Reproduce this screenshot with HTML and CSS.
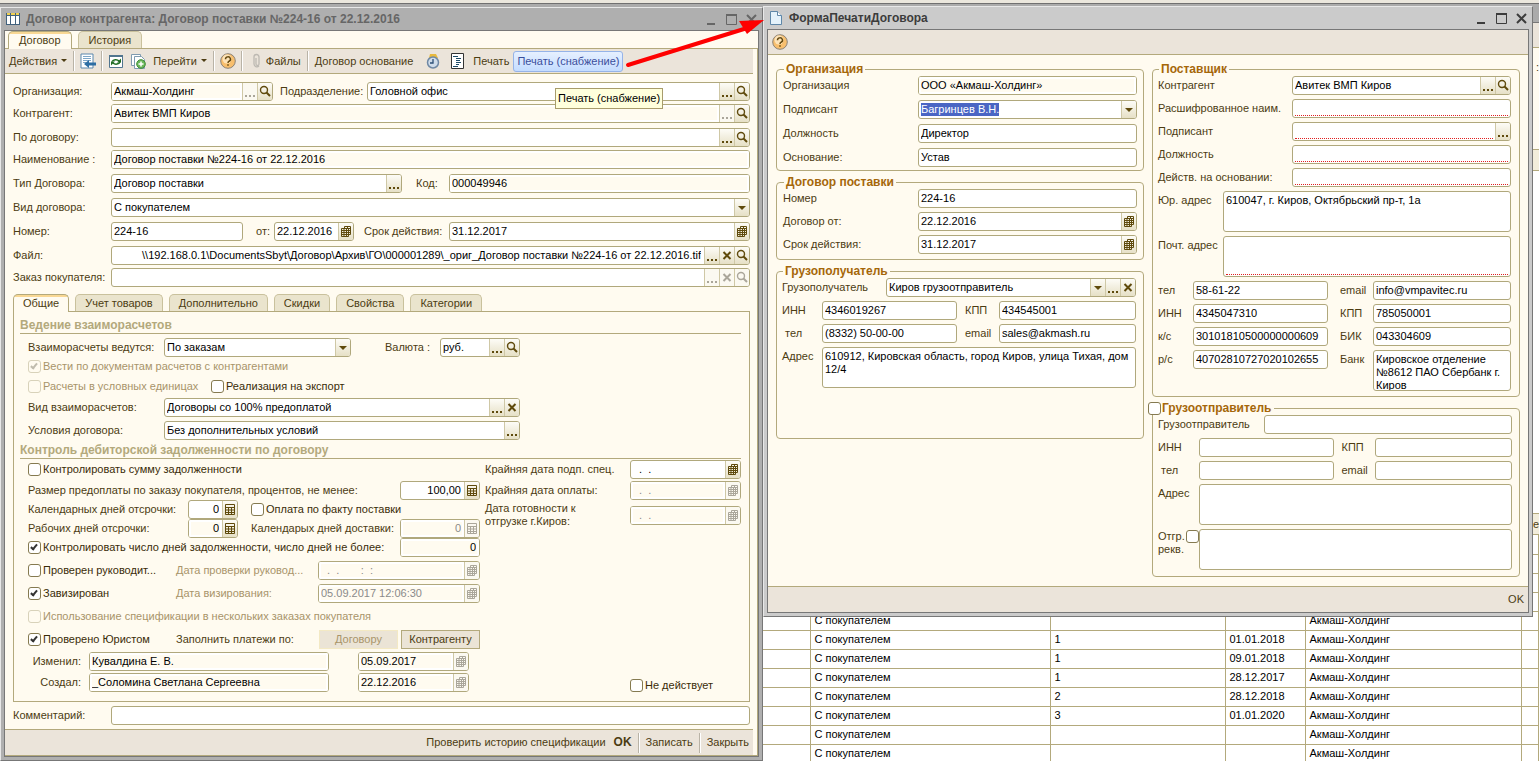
FILE: index.html
```html
<!DOCTYPE html>
<html lang="ru">
<head>
    <meta charset="UTF-8">
    <meta name="viewport" content="width=device-width, initial-scale=1.0">
    <title>Договор контрагента</title>
    <link rel="stylesheet" href="styles.css">
</head>
<body>

<!-- Shared icons -->
<svg class="sprite" aria-hidden="true">
    <symbol id="dots" viewBox="0 0 14 17"><path d="M2 12h2v2H2zM6 12h2v2H6zM10 12h2v2h-2z" fill="currentColor"/></symbol>
    <symbol id="lens" viewBox="0 0 14 17"><circle cx="6" cy="7" r="3.500" fill="none" stroke="currentColor" stroke-width="1.400"/><path d="M8.500 9.500l3.500 3.500" stroke="currentColor" stroke-width="2"/></symbol>
    <symbol id="drop" viewBox="0 0 14 17"><path d="M3 7h8l-4 4z" fill="currentColor"/></symbol>
    <symbol id="cross" viewBox="0 0 14 17"><path d="M3.500 5l7 7M10.500 5l-7 7" stroke="currentColor" stroke-width="2"/></symbol>
    <symbol id="cal" viewBox="0 0 14 17"><path d="M5.500 5V3.500h6v8H10M8.500 3v3M5.500 5.500h6M10 7.500h1.500M10 9.500h1.500" fill="none" stroke="currentColor"/><path d="M2.500 5.500h7v8h-7zM5 5v9M7.500 5v9M2.500 7.500h7M2.500 9.500h7M2.500 11.500h7" fill="none" stroke="currentColor"/></symbol>
    <symbol id="calc" viewBox="0 0 14 17"><path d="M2.500 3.500h9v10h-9zM2 6.500h10M2.500 9h9M2.500 11.500h9M5.500 7v6M8.500 7v6" fill="none" stroke="currentColor" stroke-width="1"/><path d="M2 6h10v1H2z" fill="currentColor"/></symbol>
    <symbol id="help" viewBox="0 0 16 16"><circle cx="8" cy="8" r="7.300" fill="#f8bf6d" stroke="#8b8378"/><circle cx="7" cy="6" r="4.500" fill="#fde3b8"/><path d="M5.500 6.200a2.500 2.300 0 1 1 3.600 2c-.8.400-1.100.7-1.100 1.700M8 11.200v1.600" fill="none" stroke="#63480e" stroke-width="1.500"/></symbol>
</svg>

<!-- Contract list in the back -->
<div class="backdrop">
    <div class="back-top"></div>
    <div class="back-title"></div>
    <div class="back-bar"></div>
    <div class="back-form">:</div>
    <div class="back-head"></div>
    <div class="back-list"></div>
    <div class="back-head">е</div>
    <table class="list">
        <colgroup><col class="c1"><col class="c2"><col class="c3"><col class="c4"><col class="c5"><col class="c6"><col class="c7"><col class="c8"><col></colgroup>
        <tr><td></td><td></td><td></td><td></td><td></td><td></td><td></td><td></td><td></td></tr>
        <tr><td></td><td></td><td></td><td></td><td></td><td></td><td></td><td></td><td></td></tr>
        <tr><td></td><td></td><td></td><td></td><td></td><td></td><td></td><td></td><td></td></tr>
        <tr><td></td><td></td><td></td><td></td><td></td><td></td><td></td><td></td><td></td></tr>
        <tr><td></td><td></td><td></td><td></td><td>С покупателем</td><td></td><td></td><td>Акмаш-Холдинг</td><td></td></tr>
        <tr><td></td><td></td><td></td><td></td><td>С покупателем</td><td>1</td><td>01.01.2018</td><td>Акмаш-Холдинг</td><td></td></tr>
        <tr><td></td><td></td><td></td><td></td><td>С покупателем</td><td>1</td><td>09.01.2018</td><td>Акмаш-Холдинг</td><td></td></tr>
        <tr><td></td><td></td><td></td><td></td><td>С покупателем</td><td>1</td><td>28.12.2017</td><td>Акмаш-Холдинг</td><td></td></tr>
        <tr><td></td><td></td><td></td><td></td><td>С покупателем</td><td>2</td><td>28.12.2018</td><td>Акмаш-Холдинг</td><td></td></tr>
        <tr><td></td><td></td><td></td><td></td><td>С покупателем</td><td>3</td><td>01.01.2020</td><td>Акмаш-Холдинг</td><td></td></tr>
        <tr><td></td><td></td><td></td><td></td><td>С покупателем</td><td></td><td></td><td>Акмаш-Холдинг</td><td></td></tr>
        <tr><td></td><td></td><td></td><td></td><td>С покупателем</td><td></td><td></td><td>Акмаш-Холдинг</td><td></td></tr>
    </table>
</div>

<div class="desktop">

<!-- Contract window -->
<section class="window inactive">
    <header class="title">
        <svg class="title-icon" viewBox="0 0 14 14"><path d="M0 1h14v12H0z" fill="#41617c"/><path d="M1 4h3v8H1zM5 4h4v8H5zM10 4h3v8h-3z" fill="#fff"/><path d="M1 1h3v2H1zM5 1h4v2H5zM10 1h3v2h-3z" fill="#f0d050"/></svg>
        <h1>Договор контрагента: Договор поставки №224-16 от 22.12.2016</h1>
        <button type="button" class="win-btn"><svg viewBox="0 0 14 14"><path d="M3 12h8" stroke="currentColor" stroke-width="2"/></svg></button>
        <button type="button" class="win-btn"><svg viewBox="0 0 14 14"><path d="M2.500 2.500h10v10h-10z" fill="none" stroke="currentColor"/><path d="M2 3h11" stroke="currentColor" stroke-width="2"/></svg></button>
        <button type="button" class="win-btn"><svg viewBox="0 0 14 14"><path d="M3 3l9 9M12 3l-9 9" stroke="currentColor" stroke-width="2"/></svg></button>
    </header>
    <div class="client">
        <nav class="tabs main-tabs">
            <button type="button" class="tab active">Договор</button>
            <button type="button" class="tab">История</button>
        </nav>
        <div class="sheet">
            <div class="toolbar">
                <button type="button" class="tool">Действия<i class="caret"></i></button>
                <i class="sep"></i>
                <button type="button" class="tool pic"><svg class="ico" viewBox="0 0 16 16"><path d="M1 1h12v14H1z" fill="#fff" stroke="#5b87ad"/><path d="M3 3.500h8M3 5.500h8M3 7.500h8M3 9.500h3" stroke="#7da6c8"/><path d="M16 9.500H9V7l-5 4 5 4v-2.500h7z" fill="#2c6da3"/></svg></button>
                <i class="sep"></i>
                <button type="button" class="tool pic"><svg class="ico" viewBox="0 0 16 16"><path d="M1.500 2.500h13v12h-13z" fill="#fff" stroke="#51758f"/><path d="M1 2h14v2H1z" fill="#51758f"/><path d="M4 8.500a4 3 0 0 1 7-.5M12 9a4 3 0 0 1-7 1" fill="none" stroke="#1f6b23" stroke-width="1.500"/><path d="M13 5.500v4H9zM3 12.500v-4h4z" fill="#1f6b23"/></svg></button>
                <button type="button" class="tool pic"><svg class="ico" viewBox="0 0 16 16"><path d="M1.500 1.500h9v11h-9z" fill="#fff" stroke="#7f9bb0"/><path d="M4.500 3.500h7l3 3v9h-10z" fill="#fff" stroke="#7f9bb0"/><circle cx="11" cy="11" r="4.300" fill="#6cb95c" stroke="#3f8a35"/><path d="M11 8.500v5M8.500 11h5" stroke="#fff" stroke-width="1.500"/></svg></button>
                <button type="button" class="tool">Перейти<i class="caret"></i></button>
                <i class="sep"></i>
                <button type="button" class="tool pic"><svg class="ico"><use href="#help"/></svg></button>
                <i class="sep"></i>
                <button type="button" class="tool clip"><svg class="ico" viewBox="0 0 16 16"><path d="M7 5v6a1 1 0 0 0 3 0V4a2 2 0 0 0-5 0v7a3 3 0 0 0 5 2" fill="none" stroke="#bdb9b2" stroke-width="1.300"/></svg>Файлы</button>
                <i class="sep"></i>
                <button type="button" class="tool base">Договор основание</button>
                <button type="button" class="tool"><svg class="ico" viewBox="0 0 16 16"><path d="M5 1h6l2 4H4z" fill="#e8b93c"/><circle cx="8" cy="9.500" r="5.500" fill="#cfdcea" stroke="#6f88a4" stroke-width="1.500"/><path d="M8 6v4H5" fill="none" stroke="#2b4e76" stroke-width="1.300"/></svg></button>
                <button type="button" class="tool"><svg class="ico" viewBox="0 0 16 16"><path d="M2.500.5h12v15h-12z" fill="#fff" stroke="#333"/><path d="M4 3.500h5M7 5.500h5M7 7.500h4M7 9.500h5M7 11.500h3M4 13.500h5" stroke="#1c4a66"/></svg></button>
                <button type="button" class="tool">Печать</button>
                <button type="button" class="tool hot">Печать (снабжение)</button>
            </div>

            <form class="form">
                <div class="row">
                    <label class="lab" for="org">Организация:</label>
                    <div class="field ro w162"><input id="org" value="Акмаш-Холдинг" readonly><button type="button" class="off"><svg><use href="#dots"/></svg></button><button type="button"><svg><use href="#lens"/></svg></button></div>
                    <label class="lab-dep" for="dep">Подразделение:</label>
                    <div class="field grow"><input id="dep" value="Головной офис"><button type="button"><svg><use href="#dots"/></svg></button><button type="button"><svg><use href="#lens"/></svg></button></div>
                </div>
                <div class="row">
                    <label class="lab" for="agent">Контрагент:</label>
                    <div class="field ro grow"><input id="agent" value="Авитек ВМП Киров" readonly><button type="button" class="off"><svg><use href="#dots"/></svg></button><button type="button"><svg><use href="#lens"/></svg></button></div>
                </div>
                <div class="row loose">
                    <label class="lab" for="parent">По договору:</label>
                    <div class="field grow"><input id="parent"><button type="button"><svg><use href="#dots"/></svg></button><button type="button"><svg><use href="#lens"/></svg></button></div>
                </div>
                <div class="row">
                    <label class="lab" for="name">Наименование :</label>
                    <div class="field ro grow"><input id="name" value="Договор поставки №224-16 от 22.12.2016" readonly></div>
                </div>
                <div class="row loose">
                    <label class="lab" for="type">Тип Договора:</label>
                    <div class="field w291"><input id="type" value="Договор поставки"><button type="button"><svg><use href="#dots"/></svg></button></div>
                    <label class="lab-code" for="code">Код:</label>
                    <div class="field ro grow"><input id="code" value="000049946" readonly></div>
                </div>
                <div class="row loose">
                    <label class="lab" for="kind">Вид договора:</label>
                    <div class="field grow"><select id="kind"><option>С покупателем</option></select><span class="pick"><svg><use href="#drop"/></svg></span></div>
                </div>
                <div class="row loose">
                    <label class="lab" for="num">Номер:</label>
                    <div class="field w132"><input id="num" value="224-16"></div>
                    <label class="lab-from" for="from">от:</label>
                    <div class="field w80"><input id="from" value="22.12.2016"><button type="button"><svg><use href="#cal"/></svg></button></div>
                    <label class="lab-till" for="till">Срок действия:</label>
                    <div class="field grow"><input id="till" value="31.12.2017"><button type="button"><svg><use href="#cal"/></svg></button></div>
                </div>
                <div class="row loose">
                    <label class="lab" for="file">Файл:</label>
                    <div class="field grow"><input id="file" class="num" value="\\192.168.0.1\DocumentsSbyt\Договор\Архив\ГО\000001289\_ориг_Договор поставки №224-16 от 22.12.2016.tif"><button type="button"><svg><use href="#dots"/></svg></button><button type="button"><svg><use href="#cross"/></svg></button><button type="button"><svg><use href="#lens"/></svg></button></div>
                </div>
                <div class="row">
                    <label class="lab" for="order">Заказ покупателя:</label>
                    <div class="field grow"><input id="order"><button type="button" class="off"><svg><use href="#dots"/></svg></button><button type="button" class="off"><svg><use href="#cross"/></svg></button><button type="button" class="off"><svg><use href="#lens"/></svg></button></div>
                </div>

                <nav class="tabs inner-tabs">
                    <button type="button" class="tab active">Общие</button>
                    <button type="button" class="tab">Учет товаров</button>
                    <button type="button" class="tab">Дополнительно</button>
                    <button type="button" class="tab">Скидки</button>
                    <button type="button" class="tab">Свойства</button>
                    <button type="button" class="tab">Категории</button>
                </nav>
                <div class="page">
                    <h2>Ведение взаиморасчетов</h2>
                    <div class="block">
                        <div class="row">
                            <label class="lab-pay" for="mode">Взаиморасчеты ведутся:</label>
                            <div class="field w187"><select id="mode"><option>По заказам</option></select><span class="pick"><svg><use href="#drop"/></svg></span></div>
                            <label class="lab-cur" for="cur">Валюта :</label>
                            <div class="field w80"><input id="cur" value="руб."><button type="button"><svg><use href="#dots"/></svg></button><button type="button"><svg><use href="#lens"/></svg></button></div>
                        </div>
                        <div class="checks">
                            <label class="check muted"><input type="checkbox" checked disabled>Вести по документам расчетов с контрагентами</label>
                            <div class="row">
                                <label class="check muted w183"><input type="checkbox" disabled>Расчеты в условных единицах</label>
                                <label class="check"><input type="checkbox">Реализация на экспорт</label>
                            </div>
                        </div>
                        <div class="row">
                            <label class="lab-pay" for="paykind">Вид взаиморасчетов:</label>
                            <div class="field w356"><input id="paykind" value="Договоры со 100% предоплатой"><button type="button"><svg><use href="#dots"/></svg></button><button type="button"><svg><use href="#cross"/></svg></button></div>
                        </div>
                        <div class="row loose">
                            <label class="lab-pay" for="terms">Условия договора:</label>
                            <div class="field w356"><input id="terms" value="Без дополнительных условий"><button type="button"><svg><use href="#dots"/></svg></button></div>
                        </div>
                    </div>

                    <h2>Контроль дебиторской задолженности по договору</h2>
                    <div class="control">
                        <div class="left">
                            <div class="pack">
                                <div class="row"><label class="check"><input type="checkbox">Контролировать сумму задолженности</label></div>
                                <div class="row loose">
                                    <label class="grow" for="prepay">Размер предоплаты по заказу покупателя, процентов, не менее:</label>
                                    <div class="field w80"><input id="prepay" class="num" value="100,00"><button type="button"><svg><use href="#calc"/></svg></button></div>
                                </div>
                                <div class="row">
                                    <label class="w160" for="caldays">Календарных дней отсрочки:</label>
                                    <div class="field w50"><input id="caldays" class="num" value="0"><button type="button"><svg><use href="#calc"/></svg></button></div>
                                    <label class="check after"><input type="checkbox">Оплата по факту поставки</label>
                                </div>
                                <div class="row">
                                    <label class="w160" for="workdays">Рабочих дней отсрочки:</label>
                                    <div class="field ro w50"><input id="workdays" class="num" value="0" readonly><button type="button"><svg><use href="#calc"/></svg></button></div>
                                    <label class="grow after" for="shipdays">Календарых дней доставки:</label>
                                    <div class="field ro dim w80"><input id="shipdays" class="num" value="0" readonly><button type="button" class="off"><svg><use href="#calc"/></svg></button></div>
                                </div>
                                <div class="row">
                                    <label class="check grow"><input type="checkbox" checked>Контролировать число дней задолженности, число дней не более:</label>
                                    <div class="field ro w80"><input class="num" value="0" aria-label="Число дней" readonly></div>
                                </div>
                            </div>
                            <div class="pack spaced">
                                <div class="row">
                                    <label class="check w148"><input type="checkbox">Проверен руководит...</label>
                                    <label class="muted grow" for="bossdate">Дата проверки руковод...</label>
                                    <div class="field ro dim w162"><input id="bossdate" value="  .  .       :  :" readonly><button type="button" class="off"><svg><use href="#cal"/></svg></button></div>
                                </div>
                                <div class="row">
                                    <label class="check w148"><input type="checkbox" checked>Завизирован</label>
                                    <label class="muted grow" for="visadate">Дата визирования:</label>
                                    <div class="field ro dim w162"><input id="visadate" value="05.09.2017 12:06:30" readonly><button type="button" class="off"><svg><use href="#cal"/></svg></button></div>
                                </div>
                                <div class="row"><label class="check muted"><input type="checkbox" disabled>Использование спецификации в нескольких заказах покупателя</label></div>
                                <div class="row">
                                    <label class="check w148"><input type="checkbox" checked>Проверено Юристом</label>
                                    <span class="grow">Заполнить платежи по:</span>
                                    <button type="button" class="push" disabled>Договору</button>
                                    <button type="button" class="push">Контрагенту</button>
                                </div>
                            </div>
                            <div class="pack authors">
                                <div class="row">
                                    <label for="changed">Изменил:</label>
                                    <div class="field ro w240"><input id="changed" value="Кувалдина Е. В." readonly></div>
                                    <div class="field ro w111"><input value="05.09.2017" aria-label="Дата изменения" readonly><button type="button" class="off"><svg><use href="#cal"/></svg></button></div>
                                </div>
                                <div class="row">
                                    <label for="created">Создал:</label>
                                    <div class="field ro w240"><input id="created" value="_Соломина Светлана Сергеевна" readonly></div>
                                    <div class="field ro w111"><input value="22.12.2016" aria-label="Дата создания" readonly><button type="button" class="off"><svg><use href="#cal"/></svg></button></div>
                                </div>
                            </div>
                        </div>
                        <div class="right">
                            <div class="row">
                                <label class="grow" for="d1">Крайняя дата подп. спец.</label>
                                <div class="field w111"><input id="d1" value="  .  ."><button type="button"><svg><use href="#cal"/></svg></button></div>
                            </div>
                            <div class="row loose">
                                <label class="grow" for="d2">Крайняя дата оплаты:</label>
                                <div class="field ro dim w111"><input id="d2" value="  .  ." readonly><button type="button" class="off"><svg><use href="#cal"/></svg></button></div>
                            </div>
                            <div class="row loose">
                                <label class="grow" for="d3">Дата готовности к<br>отгрузке г.Киров:</label>
                                <div class="field ro dim w111"><input id="d3" value="  .  ." readonly><button type="button" class="off"><svg><use href="#cal"/></svg></button></div>
                            </div>
                            <label class="check closed"><input type="checkbox">Не действует</label>
                        </div>
                    </div>
                </div>

                <div class="row comment">
                    <label class="lab" for="comment">Комментарий:</label>
                    <div class="field grow"><input id="comment"></div>
                </div>
            </form>

            <footer class="bottom">
                <button type="button" class="tool">Проверить историю спецификации</button>
                <button type="button" class="tool main">OK</button>
                <i class="sep"></i>
                <button type="button" class="tool">Записать</button>
                <i class="sep"></i>
                <button type="button" class="tool">Закрыть</button>
            </footer>
        </div>
    </div>
    <div class="tip" role="tooltip">Печать (снабжение)</div>
    <svg class="arrow" viewBox="0 0 146 60"><path d="M10 55L126 19" stroke="#fe0000" stroke-width="4" stroke-linecap="round"/><path d="M121 11l25-1-17 14z" fill="#fe0000"/></svg>
</section>

<!-- Print form window -->
<section class="window print">
    <header class="title">
        <svg class="title-icon" viewBox="0 0 14 14"><path d="M1.500.5h7l4 4v9h-11z" fill="#e4f2fb" stroke="#5f87a8"/><path d="M8.500.5v4h4" fill="#fff" stroke="#5f87a8"/></svg>
        <h1>ФормаПечатиДоговора</h1>
        <button type="button" class="win-btn"><svg viewBox="0 0 14 14"><path d="M3 12h8" stroke="currentColor" stroke-width="2"/></svg></button>
        <button type="button" class="win-btn"><svg viewBox="0 0 14 14"><path d="M2.500 2.500h10v10h-10z" fill="none" stroke="currentColor"/><path d="M2 3h11" stroke="currentColor" stroke-width="2"/></svg></button>
        <button type="button" class="win-btn"><svg viewBox="0 0 14 14"><path d="M3 3l9 9M12 3l-9 9" stroke="currentColor" stroke-width="2"/></svg></button>
    </header>
    <div class="client">
        <div class="toolbar"><button type="button" class="tool"><svg class="ico"><use href="#help"/></svg></button></div>
        <form class="cols">
            <div class="col">
                <fieldset class="g-org">
                    <legend>Организация</legend>
                    <div class="row"><label for="porg">Организация</label><div class="field ro w219"><input id="porg" value="ООО «Акмаш-Холдинг»" readonly></div></div>
                    <div class="row"><label for="psign">Подписант</label><div class="field w219"><input id="psign" value="Багринцев В.Н."><button type="button"><svg><use href="#drop"/></svg></button></div></div>
                    <div class="row"><label for="ppost">Должность</label><div class="field w219"><input id="ppost" value="Директор"></div></div>
                    <div class="row"><label for="pbase">Основание:</label><div class="field w219"><input id="pbase" value="Устав"></div></div>
                </fieldset>
                <fieldset class="g-deal">
                    <legend>Договор поставки</legend>
                    <div class="row"><label for="pnum">Номер</label><div class="field w219"><input id="pnum" value="224-16"></div></div>
                    <div class="row"><label for="pfrom">Договор от:</label><div class="field w219"><input id="pfrom" value="22.12.2016"><button type="button"><svg><use href="#cal"/></svg></button></div></div>
                    <div class="row"><label for="ptill">Срок действия:</label><div class="field w219"><input id="ptill" value="31.12.2017"><button type="button"><svg><use href="#cal"/></svg></button></div></div>
                </fieldset>
                <fieldset class="g-cons">
                    <legend>Грузополучатель</legend>
                    <div class="row"><label for="cons">Грузополучатель</label><div class="field w250"><input id="cons" value="Киров грузоотправитель"><button type="button"><svg><use href="#drop"/></svg></button><button type="button"><svg><use href="#dots"/></svg></button><button type="button"><svg><use href="#cross"/></svg></button></div></div>
                    <div class="quad">
                        <label for="cinn">ИНН</label><div class="field"><input id="cinn" value="4346019267"></div>
                        <label for="ckpp">КПП</label><div class="field"><input id="ckpp" value="434545001"></div>
                        <label class="in" for="ctel">тел</label><div class="field"><input id="ctel" value="(8332) 50-00-00"></div>
                        <label for="cmail">email</label><div class="field"><input id="cmail" value="sales@akmash.ru"></div>
                        <label class="top" for="caddr">Адрес</label><textarea id="caddr" class="wide">610912, Кировская область, город Киров, улица Тихая, дом 12/4</textarea>
                    </div>
                </fieldset>
            </div>
            <div class="col">
                <fieldset class="g-supp">
                    <legend>Поставщик</legend>
                    <div class="row"><label for="sname">Контрагент</label><div class="field w219"><input id="sname" value="Авитек ВМП Киров"><button type="button"><svg><use href="#dots"/></svg></button><button type="button"><svg><use href="#lens"/></svg></button></div></div>
                    <div class="row"><label for="sfull">Расшифрованное наим.</label><div class="field w219"><input id="sfull" class="must"></div></div>
                    <div class="row"><label for="ssign">Подписант</label><div class="field w219"><input id="ssign" class="must"><button type="button"><svg><use href="#dots"/></svg></button></div></div>
                    <div class="row"><label for="spost">Должность</label><div class="field w219"><input id="spost" class="must"></div></div>
                    <div class="row"><label for="sbase">Действ. на основании:</label><div class="field w219"><input id="sbase" class="must"></div></div>
                    <div class="row high"><label for="sjur">Юр. адрес</label><textarea id="sjur" class="w288">610047, г. Киров, Октябрьский пр-т, 1а</textarea></div>
                    <div class="row high"><label for="smail">Почт. адрес</label><div class="area w288"><textarea id="smail" class="must"></textarea></div></div>
                    <div class="quad">
                        <label for="stel">тел</label><div class="field"><input id="stel" value="58-61-22"></div>
                        <label for="semail">email</label><div class="field"><input id="semail" value="info@vmpavitec.ru"></div>
                        <label for="sinn">ИНН</label><div class="field"><input id="sinn" value="4345047310"></div>
                        <label for="skpp">КПП</label><div class="field"><input id="skpp" value="785050001"></div>
                        <label for="sks">к/с</label><div class="field"><input id="sks" value="30101810500000000609"></div>
                        <label for="sbik">БИК</label><div class="field"><input id="sbik" value="043304609"></div>
                        <label class="top" for="srs">р/с</label><div class="field"><input id="srs" value="40702810727020102655"></div>
                        <label class="top" for="sbank">Банк</label><textarea id="sbank">Кировское отделение №8612 ПАО Сбербанк г. Киров</textarea>
                    </div>
                </fieldset>
                <fieldset class="g-send">
                    <legend><label class="check"><input type="checkbox">Грузоотправитель</label></legend>
                    <div class="row"><label for="send">Грузоотправитель</label><div class="field w248"><input id="send"></div></div>
                    <div class="quad">
                        <label for="ginn">ИНН</label><div class="field"><input id="ginn"></div>
                        <label for="gkpp">КПП</label><div class="field"><input id="gkpp"></div>
                        <label class="in" for="gtel">тел</label><div class="field"><input id="gtel"></div>
                        <label for="gmail">email</label><div class="field"><input id="gmail"></div>
                        <label class="top" for="gaddr">Адрес</label><textarea id="gaddr" class="wide"></textarea>
                        <div class="props"><label for="gprops">Отгр.<br>рекв.</label><input type="checkbox" aria-label="Отгрузочные реквизиты"></div><textarea id="gprops" class="wide"></textarea>
                    </div>
                </fieldset>
            </div>
        </form>
        <footer class="bottom"><button type="button" class="tool">OK</button></footer>
    </div>
</section>

</div>

<script>
    // Put the cursor on the signer, text selected
    const signer = document.getElementById("psign");
    signer.focus();
    signer.select();
</script>

</body>
</html>
```
FILE: styles.css
```css
* {
    box-sizing: border-box;
}

body {
    margin: 0;
    height: 100vh;
    overflow: hidden;
    position: relative;
    font-family: "Liberation Sans", Arial, sans-serif;
    font-size: 11px;
    line-height: 13px;
    color: #4c3c12;
    background: #fff;
}

button, input, select, textarea {
    font: inherit;
    color: inherit;
    margin: 0;
    padding: 0;
    border: none;
    background: none;
    outline: none;
}

.sprite {
    display: none;
}

/* list behind the windows */
.backdrop {
    position: absolute;
    inset: 0;
    overflow: hidden;
    text-align: right;
}

.back-top {
    height: 4px;
    background: #ebe7dd;
    border-bottom: 1px solid #707070;
}

.back-title {
    height: 19px;
    background: #ababab;
    border-bottom: 1px solid #777;
}

.back-bar {
    height: 25px;
    background: #ebe4da;
    border-bottom: 1px solid #b3a97c;
}

.back-form {
    height: 101px;
    padding-top: 13px;
    background: #fffbf0;
}

.back-head {
    height: 22px;
    padding-top: 4px;
    background: #f2eddb;
    border: 1px solid #b3a97c;
    border-width: 1px 0;
}

.back-list {
    height: 342px;
    background: #fff;
}

.list {
    width: 100%;
    table-layout: fixed;
    border-collapse: collapse;
    color: #000;
    text-align: left;
}

.list td {
    height: 19px;
    padding: 0 4px;
    border-right: 1px solid #b3a97c;
    border-bottom: 1px solid #b3a97c;
}

.c1 { width: 23px; }
.c2 { width: 142px; }
.c3 { width: 340px; }
.c4 { width: 305px; }
.c5 { width: 240px; }
.c6 { width: 175px; }
.c7 { width: 80px; }
.c8 { width: 216px; }

/* windows */
.desktop {
    position: relative;
    display: grid;
    grid-template-columns: 763fr 770fr;
    align-items: start;
    padding: 6px 6px 0 0;
}

.window {
    position: relative;
    padding: 0 3px 3px;
    border: 1px solid #777;
    border-top-color: #e8e8e8;
    border-left-color: #e8e8e8;
    background: #cbcbcb;
}

.window.inactive {
    background: #afafaf;
    margin-top: 1px;
}

.title {
    display: flex;
    align-items: center;
    height: 22px;
    padding: 0 1px 0 2px;
    gap: 6px;
    color: #3c3c3c;
}

.inactive .title {
    color: #666;
}

.title h1 {
    flex: 1;
    margin: 0;
    font-size: 12px;
    white-space: nowrap;
    overflow: hidden;
}

.title-icon {
    width: 14px;
    height: 14px;
}

.win-btn {
    width: 14px;
    height: 14px;
}

.win-btn svg {
    display: block;
}

.client {
    border: 1px solid #777;
    background: #fffbf0;
}

.tabs {
    display: flex;
    align-items: flex-end;
    gap: 6px;
}

.main-tabs {
    padding: 0 3px;
}

.tab {
    height: 17px;
    padding: 0 10px;
    border: 1px solid #c9c19c;
    border-bottom: none;
    border-radius: 5px 5px 0 0;
    background: #eae4cd;
    white-space: nowrap;
}

.tab.active {
    position: relative;
    height: 18px;
    margin-bottom: -1px;
    border-color: #b3a97c;
    background: linear-gradient(#f9d894 0, #f9d894 2px, #fffbf0 2px);
}

.sheet {
    border: 1px solid #b3a97c;
    border-left: none;
}

.toolbar {
    display: flex;
    align-items: center;
    height: 25px;
    background: #ebe4da;
    border-bottom: 1px solid #b3a97c;
}

.sheet .toolbar,
.sheet .bottom {
    margin-right: 4px;
}

.tool {
    display: flex;
    align-items: center;
    padding: 0 4px;
    height: 21px;
    white-space: nowrap;
}

.tool.pic {
    padding: 0 3px;
}

.tool.base {
    margin-right: 4px;
}

.tool.hot {
    padding: 0 3px;
    border: 1px solid #95b3e8;
    border-radius: 3px;
    background: linear-gradient(#e6f0ff, #c4dcff);
    color: #3a4e9c;
}

.ico {
    width: 16px;
    height: 16px;
}

.tool.clip {
    gap: 1px;
}

.caret {
    margin: 0 0 2px 4px;
    border: 3px solid transparent;
    border-top-color: #4c3c12;
    border-bottom: none;
}

.sep {
    width: 2px;
    height: 20px;
    margin: 0 2px;
    border-left: 1px solid #b9b3a6;
    background: #fff;
}

/* fields */
.row {
    display: flex;
    align-items: center;
    min-height: 19px;
}

.grow {
    flex: 1;
    min-width: 0;
}

label {
    white-space: nowrap;
}

.field {
    display: flex;
    height: 19px;
    border: 1px solid #b0a87c;
    border-radius: 3px;
    background: #fff;
    overflow: hidden;
}

.field input,
.field select {
    flex: 1;
    min-width: 0;
    padding: 0 3px 0 2px;
    color: #000;
    appearance: none;
    white-space: pre;
}

.field.ro input {
    border: 2px solid #fff;
    padding: 0 1px 0 0;
    background: #fffbf0;
}

.field.dim input {
    color: #8a8a8a;
}

.field .num {
    text-align: right;
}

.field button,
.pick {
    width: 15px;
    border-left: 1px solid #cfc8a6;
    background: linear-gradient(#fdfcf7, #e6e0c6);
    color: #5f4a0c;
}

.field svg {
    display: block;
    width: 14px;
    height: 17px;
}

.field .off {
    color: #aaa69a;
    background: #fbf9f1;
}

.field .must {
    margin: 0 2px 1px;
    padding: 0;
    border-bottom: 1px dotted #e02020;
}

::selection {
    background: #4a66c4;
    color: #fff;
}

textarea,
.area {
    display: block;
    height: 41px;
    padding: 2px;
    border: 1px solid #b0a87c;
    border-radius: 3px;
    background: #fff;
    color: #000;
    resize: none;
    overflow: hidden;
}

.area {
    padding: 0 2px 1px;
}

.area textarea {
    width: 100%;
    height: 100%;
    border: none;
    border-bottom: 1px dotted #e02020;
    border-radius: 0;
}

.check {
    display: flex;
    align-items: center;
    gap: 2px;
    color: #3a2c08;
}

input[type="checkbox"] {
    flex: none;
    appearance: none;
    position: relative;
    width: 13px;
    height: 13px;
    border: 1px solid #857a50;
    border-radius: 3px;
    background: #fff;
}

input[type="checkbox"]:checked::before {
    content: "";
    position: absolute;
    left: 3px;
    top: 1px;
    width: 2px;
    height: 5px;
    border: solid #333;
    border-width: 0 2px 2px 0;
    transform: rotate(40deg);
}

input[type="checkbox"]:disabled {
    border-color: #d8d2ba;
    background: #fffbf0;
}

input[type="checkbox"]:disabled::before {
    border-color: #c0bcae;
}

.muted {
    color: #a8946a;
}

/* contract form */
.form {
    display: flex;
    flex-direction: column;
    gap: 3px;
    padding: 8px 7px 4px 8px;
}

.loose {
    margin-top: 2px;
}

.lab { width: 98px; }
.lab-dep { width: 94px; padding-left: 7px; }
.lab-code { width: 47px; padding-left: 14px; }
.lab-from { width: 31px; padding-left: 13px; }
.lab-till { width: 95px; padding-left: 10px; }
.lab-pay { width: 136px; }
.lab-cur { width: 89px; padding-left: 34px; }

.w50 { width: 50px; }
.w80 { width: 80px; }
.w111 { width: 111px; }
.w132 { width: 132px; }
.w148 { width: 148px; }
.w160 { width: 160px; }
.w162 { width: 162px; }
.w183 { width: 183px; }
.w187 { width: 187px; }
.w219 { width: 219px; }
.w240 { width: 240px; }
.w248 { width: 248px; }
.w250 { width: 250px; }
.w288 { width: 288px; }
.w291 { width: 291px; }
.w356 { width: 356px; }

.inner-tabs {
    margin-top: 4px;
}

.inner-tabs .tab {
    padding: 0 9px;
}

.page {
    margin-top: -3px;
    padding: 6px 8px 9px 6px;
    border: 1px solid #b3a97c;
}

h2 {
    margin: 0;
    padding-bottom: 1px;
    border-bottom: 1px solid #b3a97c;
    font-size: 12px;
    line-height: 14px;
    color: #b3a97c;
}

.block {
    display: flex;
    flex-direction: column;
    gap: 2px;
    padding: 4px 0 3px 8px;
}

.checks {
    display: flex;
    flex-direction: column;
    gap: 1px;
    margin-top: -2px;
}

.checks .check {
    min-height: 19px;
}

.control {
    display: grid;
    grid-template-columns: 452px 1fr;
    column-gap: 5px;
    padding: 1px 0 0 8px;
}

.spaced {
    display: flex;
    flex-direction: column;
    gap: 4px;
    margin: 4px 0 3px;
}

.after {
    margin-left: 13px;
}

.push {
    width: 79px;
    height: 19px;
    border: 1px solid #b3a97c;
    background: #ebe4d6;
    margin-left: 3px;
}

.push:disabled {
    border-color: #f3e9c4;
    color: #a8946a;
}

.authors {
    display: flex;
    flex-direction: column;
    gap: 2px;
}

.authors .row {
    gap: 8px;
}

.authors label {
    width: 53px;
    text-align: right;
}

.authors .w111 {
    margin-left: 21px;
}

.right {
    display: flex;
    flex-direction: column;
}

.closed {
    margin: auto 0 0 145px;
}

.comment {
    margin-top: 1px;
}

.bottom {
    display: flex;
    align-items: center;
    justify-content: flex-end;
    height: 26px;
    background: #ebe4da;
    border-top: 1px solid #b3a97c;
}

.main {
    font-size: 12px;
    font-weight: bold;
}

.tip {
    position: absolute;
    top: 80px;
    left: 554px;
    padding: 3px 2px;
    border: 1px solid #a89c6c;
    background: #ffffdc;
    color: #000;
    white-space: nowrap;
}

.arrow {
    position: absolute;
    z-index: 2;
    top: 2px;
    right: -2px;
    width: 146px;
    height: 60px;
}

/* print form */
.cols {
    display: grid;
    grid-template-columns: 1fr 1fr;
    gap: 8px;
    padding: 7px 8px 9px;
}

.col {
    display: flex;
    flex-direction: column;
    gap: 4px;
}

fieldset {
    display: flex;
    flex-direction: column;
    gap: 4px;
    min-width: 0;
    margin: 0;
    padding: 0 6px 5px 6px;
    border: 1px solid #b3a97c;
    border-radius: 4px;
}

legend {
    margin-left: 1px;
    padding: 0 2px;
    font-size: 12px;
    font-weight: bold;
    line-height: 14px;
    color: #a5670a;
}

fieldset .row {
    justify-content: space-between;
}

.g-org {
    gap: 5px;
    padding-bottom: 3px;
}

.g-cons {
    padding: 0 7px 50px 5px;
}

.g-supp {
    padding: 0 8px 5px 5px;
}

.high {
    align-items: flex-start;
}

.high label,
.top {
    padding-top: 3px;
    align-self: start;
}

.quad {
    display: grid;
    grid-template-columns: 40px 135fr 42px 137fr;
    align-items: center;
    row-gap: 4px;
}

.g-supp .quad {
    grid-template-columns: 35px 135fr 45px 138fr;
}

.g-send .quad {
    grid-template-columns: 41px 135fr 41px 138fr;
}

.quad .field,
.quad textarea {
    min-width: 0;
    width: 100%;
    align-self: start;
}

.quad label:nth-of-type(even) {
    padding-left: 8px;
}

.g-supp .quad label:nth-of-type(even) {
    padding-left: 12px;
}

.quad .wide {
    grid-column: 2 / -1;
}

.quad .in {
    padding-left: 3px;
}

.g-send {
    padding: 0 7px 6px 5px;
}

.g-send legend {
    margin-left: -10px;
    padding-left: 0;
}

.g-send legend .check {
    color: inherit;
    gap: 1px;
}

.props {
    position: relative;
    align-self: start;
    padding-top: 1px;
}

.props input {
    position: absolute;
    right: 0;
    top: 1px;
}
```
